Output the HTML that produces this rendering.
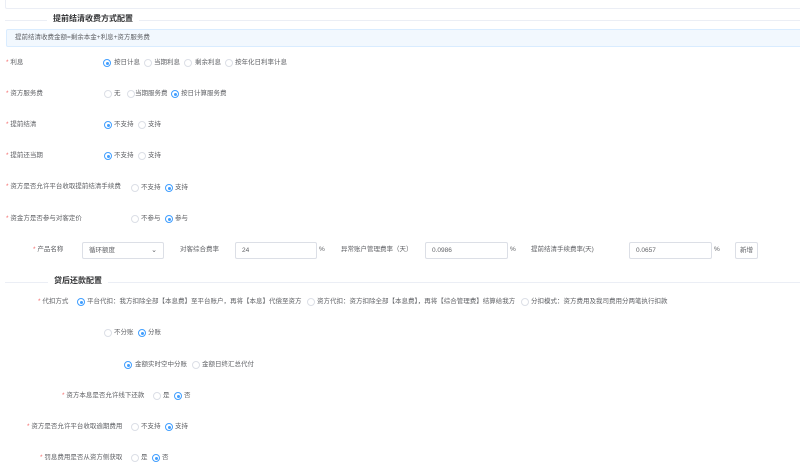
<!DOCTYPE html>
<html><head><meta charset="utf-8"><style>
*{margin:0;padding:0;box-sizing:border-box}
body{width:800px;height:461px;overflow:hidden;background:#fff;position:relative;font-family:"Liberation Sans","Noto Sans CJK SC",sans-serif;font-size:6.5px;color:#606266}
#w{position:absolute;left:0;top:1px;width:800px;height:461px}
.a{position:absolute;white-space:nowrap;line-height:10px}
.r{position:absolute;width:8px;height:8px;border:1px solid #dcdfe6;border-radius:50%;background:#fff}
.r.on{border-color:#409eff;background:#fff}
.r.on:after{content:"";position:absolute;left:1.5px;top:1.5px;width:3px;height:3px;border-radius:50%;background:#409eff}
.st{color:#f56c6c}
.t{font-size:8px;font-weight:bold;color:#303133}
.ln{position:absolute;height:1px;background:#ebeef5}
.in{position:absolute;border:1px solid #dcdfe6;border-radius:2px;height:17px;padding-left:6px;line-height:15px;color:#606266}
</style></head><body><div id="w">
<div style="position:absolute;left:5px;top:-3px;width:800px;height:11px;border:1px solid #ebeef5;border-top:none;border-radius:0 0 2px 2px"></div>
<div class="ln" style="left:5px;top:19px;width:795px"></div>
<div class="a t" style="left:47px;top:13px;background:#fff;padding:0 6px">提前结清收费方式配置</div>
<div style="position:absolute;left:6px;top:28px;width:800px;height:18px;background:#f2f8fe;border:1px solid #d9ecff;border-radius:2px"></div>
<div class="a" style="left:15px;top:32px">提前结清收费金额=剩余本金+利息+资方服务费</div>

<div class="a" style="left:6px;top:57px"><span class="st">*</span> 利息</div>
<div class="r on" style="left:103px;top:58px"></div><div class="a" style="left:114px;top:57px">按日计息</div>
<div class="r" style="left:144px;top:58px"></div><div class="a" style="left:154px;top:57px">当期利息</div>
<div class="r" style="left:184px;top:58px"></div><div class="a" style="left:195px;top:57px">剩余利息</div>
<div class="r" style="left:225px;top:58px"></div><div class="a" style="left:235px;top:57px">按年化日利率计息</div>

<div class="a" style="left:6px;top:88px"><span class="st">*</span> 资方服务费</div>
<div class="r" style="left:104px;top:89px"></div><div class="a" style="left:114px;top:88px">无</div>
<div class="r" style="left:127px;top:89px"></div><div class="a" style="left:135px;top:88px">当期服务费</div>
<div class="r on" style="left:171px;top:89px"></div><div class="a" style="left:181px;top:88px">按日计算服务费</div>

<div class="a" style="left:6px;top:119px"><span class="st">*</span> 提前结清</div>
<div class="r on" style="left:104px;top:120px"></div><div class="a" style="left:114px;top:119px">不支持</div>
<div class="r" style="left:138px;top:120px"></div><div class="a" style="left:148px;top:119px">支持</div>

<div class="a" style="left:6px;top:150px"><span class="st">*</span> 提前还当期</div>
<div class="r on" style="left:104px;top:151px"></div><div class="a" style="left:114px;top:150px">不支持</div>
<div class="r" style="left:138px;top:151px"></div><div class="a" style="left:148px;top:150px">支持</div>

<div class="a" style="left:6px;top:181px"><span class="st">*</span> 资方是否允许平台收取提前结清手续费</div>
<div class="r" style="left:131px;top:183px"></div><div class="a" style="left:141px;top:182px">不支持</div>
<div class="r on" style="left:165px;top:183px"></div><div class="a" style="left:175px;top:182px">支持</div>

<div class="a" style="left:6px;top:213px"><span class="st">*</span> 资金方是否参与对客定价</div>
<div class="r" style="left:131px;top:214px"></div><div class="a" style="left:141px;top:213px">不参与</div>
<div class="r on" style="left:165px;top:214px"></div><div class="a" style="left:175px;top:213px">参与</div>

<div class="a" style="left:33px;top:244px"><span class="st">*</span> 产品名称</div>
<div class="in" style="left:82px;top:241px;width:82px">循环额度<span style="position:absolute;right:6px;top:0;font-size:7px">⌄</span></div>
<div class="a" style="left:180px;top:244px">对客综合费率</div>
<div class="in" style="left:235px;top:241px;width:82px">24</div>
<div class="a" style="left:319px;top:244px">%</div>
<div class="a" style="left:341px;top:244px">异常账户管理费率（天）</div>
<div class="in" style="left:425px;top:241px;width:83px">0.0986</div>
<div class="a" style="left:510px;top:244px">%</div>
<div class="a" style="left:531px;top:244px">提前结清手续费率(天)</div>
<div class="in" style="left:629px;top:241px;width:83px">0.0657</div>
<div class="a" style="left:714px;top:244px">%</div>
<div class="in" style="left:735px;top:241px;width:23px;padding-left:4px;color:#606266">新增</div>

<div class="ln" style="left:5px;top:281px;width:795px"></div>
<div class="a t" style="left:48px;top:275px;background:#fff;padding:0 6px">贷后还款配置</div>

<div class="a" style="left:38px;top:296px"><span class="st">*</span> 代扣方式</div>
<div class="r on" style="left:77px;top:297px"></div><div class="a" style="left:87px;top:296px">平台代扣：我方扣除全部【本息费】至平台账户，再将【本息】代偿至资方</div>
<div class="r" style="left:307px;top:297px"></div><div class="a" style="left:317px;top:296px">资方代扣：资方扣除全部【本息费】，再将【综合管理费】结算给我方</div>
<div class="r" style="left:521px;top:297px"></div><div class="a" style="left:531px;top:296px">分扣模式：资方费用及我司费用分两笔执行扣款</div>

<div class="r" style="left:104px;top:328px"></div><div class="a" style="left:114px;top:327px">不分账</div>
<div class="r on" style="left:138px;top:328px"></div><div class="a" style="left:148px;top:327px">分账</div>

<div class="r on" style="left:124px;top:360px"></div><div class="a" style="left:135px;top:359px">金额实时空中分账</div>
<div class="r" style="left:192px;top:360px"></div><div class="a" style="left:202px;top:359px">金额日终汇总代付</div>

<div class="a" style="left:62px;top:390px"><span class="st">*</span> 资方本息是否允许线下还款</div>
<div class="r" style="left:153px;top:391px"></div><div class="a" style="left:163px;top:390px">是</div>
<div class="r on" style="left:174px;top:391px"></div><div class="a" style="left:184px;top:390px">否</div>

<div class="a" style="left:27px;top:421px"><span class="st">*</span> 资方是否允许平台收取逾期费用</div>
<div class="r" style="left:131px;top:422px"></div><div class="a" style="left:141px;top:421px">不支持</div>
<div class="r on" style="left:165px;top:422px"></div><div class="a" style="left:175px;top:421px">支持</div>

<div class="a" style="left:40px;top:452px"><span class="st">*</span> 罚息费用是否从资方侧获取</div>
<div class="r" style="left:131px;top:453px"></div><div class="a" style="left:141px;top:452px">是</div>
<div class="r on" style="left:152px;top:453px"></div><div class="a" style="left:162px;top:452px">否</div>
</div></body></html>
